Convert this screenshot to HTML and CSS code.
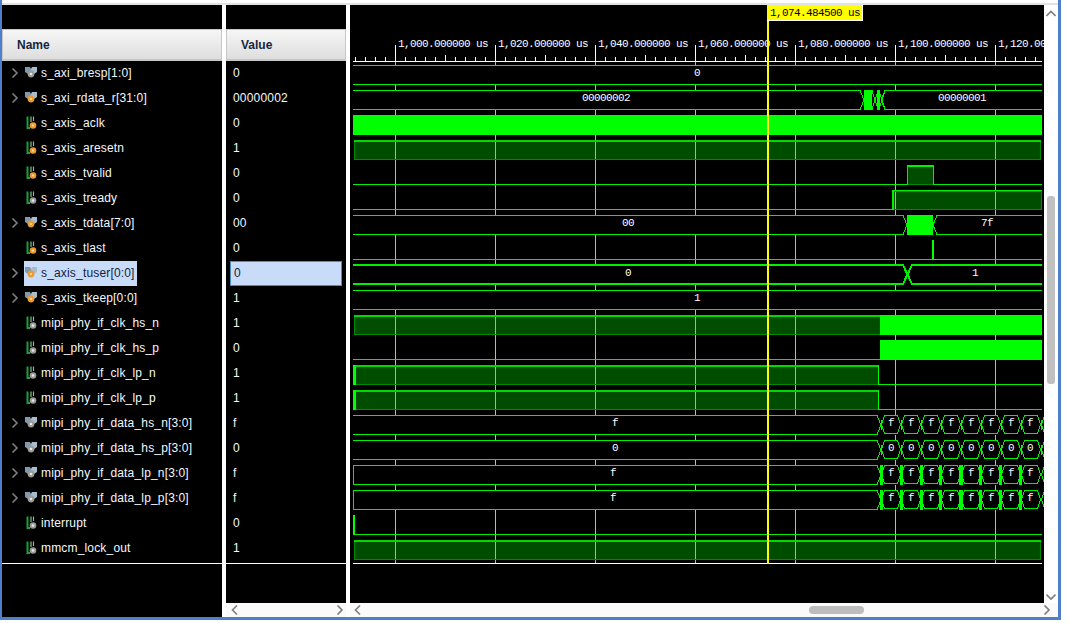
FILE: index.html
```html
<!DOCTYPE html>
<html lang="en">
<head>
<meta charset="utf-8">
<title>Waveform viewer</title>
<link rel="stylesheet" href="styles.css">
</head>
<body>
<svg class="defs" width="0" height="0" aria-hidden="true">
  <defs>
    <symbol id="bus-o" viewBox="0 0 14 12"><path class="bus-a" d="M1 0h5l1 2v5H4L1 5z"/><path class="bus-b" d="M13 0H8L7 2v5h3l3-2z"/><circle class="dot-o" cx="7" cy="7" r="3.4"/><circle class="dot-c" cx="7" cy="7" r="1.1"/></symbol>
    <symbol id="bus-g" viewBox="0 0 14 12"><path class="bus-a" d="M1 0h5l1 2v5H4L1 5z"/><path class="bus-b" d="M13 0H8L7 2v5h3l3-2z"/><circle class="dot-g" cx="7" cy="7" r="3.4"/><circle class="dot-w" cx="7" cy="7" r="1.3"/></symbol>
    <symbol id="sig-o" viewBox="0 0 14 14"><path class="sig-l" d="M3.500 .5V12H6"/><path class="sig-r" d="M7 .5V6M9.500 .5V5"/><circle class="dot-o" cx="9" cy="9.500" r="3.300"/><circle class="dot-c" cx="9" cy="9.500" r="1.100"/></symbol>
    <symbol id="sig-g" viewBox="0 0 14 14"><path class="sig-l" d="M3.500 .5V12H6"/><path class="sig-r" d="M7 .5V6M9.500 .5V5"/><circle class="dot-g" cx="9" cy="9.500" r="3.300"/><circle class="dot-w" cx="9" cy="9.500" r="1.300"/></symbol>
    <symbol id="chev-r" viewBox="0 0 8 10"><path class="chev" d="M1.500 .5l4.500 4.500-4.500 4.500"/></symbol>
    <symbol id="chev-l" viewBox="0 0 8 10"><path class="chev" d="M6 .5L1.500 5 6 9.500"/></symbol>
    <symbol id="chev-u" viewBox="0 0 10 8"><path class="chev" d="M.5 6L5 1.500 9.500 6"/></symbol>
    <symbol id="chev-d" viewBox="0 0 10 8"><path class="chev" d="M.5 1.500L5 6 9.500 1.500"/></symbol>
  </defs>
</svg>
<div class="window">
  <div class="strip"></div>
  <div class="panes">
    <section class="name-pane">
      <div class="top-gap"></div>
      <div class="head head-name">Name</div>
      <div class="rows">
        <div class="row"><svg class="expander"><use href="#chev-r"/></svg><svg class="icon"><use href="#bus-g"/></svg><span class="label">s_axi_bresp[1:0]</span></div>
        <div class="row"><svg class="expander"><use href="#chev-r"/></svg><svg class="icon"><use href="#bus-o"/></svg><span class="label">s_axi_rdata_r[31:0]</span></div>
        <div class="row"><span class="expander"></span><svg class="icon"><use href="#sig-o"/></svg><span class="label">s_axis_aclk</span></div>
        <div class="row"><span class="expander"></span><svg class="icon"><use href="#sig-o"/></svg><span class="label">s_axis_aresetn</span></div>
        <div class="row"><span class="expander"></span><svg class="icon"><use href="#sig-o"/></svg><span class="label">s_axis_tvalid</span></div>
        <div class="row"><span class="expander"></span><svg class="icon"><use href="#sig-g"/></svg><span class="label">s_axis_tready</span></div>
        <div class="row"><svg class="expander"><use href="#chev-r"/></svg><svg class="icon"><use href="#bus-o"/></svg><span class="label">s_axis_tdata[7:0]</span></div>
        <div class="row"><span class="expander"></span><svg class="icon"><use href="#sig-o"/></svg><span class="label">s_axis_tlast</span></div>
        <div class="row"><svg class="expander"><use href="#chev-r"/></svg><div class="selected"><svg class="icon"><use href="#bus-o"/></svg><span class="label">s_axis_tuser[0:0]</span></div></div>
        <div class="row"><svg class="expander"><use href="#chev-r"/></svg><svg class="icon"><use href="#bus-o"/></svg><span class="label">s_axis_tkeep[0:0]</span></div>
        <div class="row"><span class="expander"></span><svg class="icon"><use href="#sig-g"/></svg><span class="label">mipi_phy_if_clk_hs_n</span></div>
        <div class="row"><span class="expander"></span><svg class="icon"><use href="#sig-g"/></svg><span class="label">mipi_phy_if_clk_hs_p</span></div>
        <div class="row"><span class="expander"></span><svg class="icon"><use href="#sig-g"/></svg><span class="label">mipi_phy_if_clk_lp_n</span></div>
        <div class="row"><span class="expander"></span><svg class="icon"><use href="#sig-g"/></svg><span class="label">mipi_phy_if_clk_lp_p</span></div>
        <div class="row"><svg class="expander"><use href="#chev-r"/></svg><svg class="icon"><use href="#bus-g"/></svg><span class="label">mipi_phy_if_data_hs_n[3:0]</span></div>
        <div class="row"><svg class="expander"><use href="#chev-r"/></svg><svg class="icon"><use href="#bus-g"/></svg><span class="label">mipi_phy_if_data_hs_p[3:0]</span></div>
        <div class="row"><svg class="expander"><use href="#chev-r"/></svg><svg class="icon"><use href="#bus-g"/></svg><span class="label">mipi_phy_if_data_lp_n[3:0]</span></div>
        <div class="row"><svg class="expander"><use href="#chev-r"/></svg><svg class="icon"><use href="#bus-g"/></svg><span class="label">mipi_phy_if_data_lp_p[3:0]</span></div>
        <div class="row"><span class="expander"></span><svg class="icon"><use href="#sig-g"/></svg><span class="label">interrupt</span></div>
        <div class="row"><span class="expander"></span><svg class="icon"><use href="#sig-g"/></svg><span class="label">mmcm_lock_out</span></div>
      </div>
      <div class="end-line"></div>
    </section>

    <section class="value-pane">
      <div class="top-gap"></div>
      <div class="head head-value">Value</div>
      <div class="rows">
        <div class="vrow">0</div>
        <div class="vrow">00000002</div>
        <div class="vrow">0</div>
        <div class="vrow">1</div>
        <div class="vrow">0</div>
        <div class="vrow">0</div>
        <div class="vrow">00</div>
        <div class="vrow">0</div>
        <div class="vrow vrow-selected">0</div>
        <div class="vrow">1</div>
        <div class="vrow">1</div>
        <div class="vrow">0</div>
        <div class="vrow">1</div>
        <div class="vrow">1</div>
        <div class="vrow">f</div>
        <div class="vrow">0</div>
        <div class="vrow">f</div>
        <div class="vrow">f</div>
        <div class="vrow">0</div>
        <div class="vrow">1</div>
      </div>
      <div class="end-line"></div>
      <div class="spacer"></div>
      <div class="hscroll"><svg class="arrow-h"><use href="#chev-l"/></svg><svg class="arrow-h"><use href="#chev-r"/></svg></div>
    </section>

    <section class="wave-pane">
      <div class="wave-main">
        <svg class="wave" viewBox="350 5 694 598" width="694" height="598">
          <defs>
            <pattern id="ticks" patternUnits="userSpaceOnUse" x="395" y="50" width="100" height="11">
              <rect class="tick" x="10" y="7" width="1" height="4"/><rect class="tick" x="20" y="7" width="1" height="4"/>
              <rect class="tick" x="30" y="7" width="1" height="4"/><rect class="tick" x="40" y="7" width="1" height="4"/>
              <rect class="tick" x="50" y="5" width="1" height="6"/><rect class="tick" x="60" y="7" width="1" height="4"/>
              <rect class="tick" x="70" y="7" width="1" height="4"/><rect class="tick" x="80" y="7" width="1" height="4"/>
              <rect class="tick" x="90" y="7" width="1" height="4"/>
            </pattern>
            <g id="cell"><path class="wire" d="M.5 9.500L3.500 .5H16.500L19.500 9.500L16.500 18.500H3.500Z"/></g>
            <g id="cellrow">
              <use href="#cell" x="0"/><use href="#cell" x="20"/><use href="#cell" x="40"/><use href="#cell" x="60"/><use href="#cell" x="80"/>
              <use href="#cell" x="100"/><use href="#cell" x="120"/><use href="#cell" x="140"/>
            </g>
            <g id="waists">
              <rect class="solid" x="0" y="5" width="1" height="10"/><rect class="solid" x="20" y="5" width="1" height="10"/><rect class="solid" x="40" y="5" width="1" height="10"/>
              <rect class="solid" x="60" y="5" width="1" height="10"/><rect class="solid" x="80" y="5" width="1" height="10"/><rect class="solid" x="100" y="5" width="1" height="10"/>
              <rect class="solid" x="120" y="5" width="1" height="10"/><rect class="solid" x="140" y="5" width="1" height="10"/><rect class="solid" x="160" y="5" width="1" height="10"/>
            </g>
            <g id="bars">
              <rect class="solid" x="0" y="0" width="3" height="20"/><rect class="solid" x="20" y="0" width="3" height="20"/><rect class="solid" x="40" y="0" width="3" height="20"/>
              <rect class="solid" x="59" y="0" width="3" height="20"/><rect class="solid" x="79" y="0" width="4" height="20"/><rect class="solid" x="99" y="0" width="3" height="20"/>
              <rect class="solid" x="119" y="0" width="3" height="20"/><rect class="solid" x="139" y="0" width="3" height="20"/>
            </g>
            <g id="labels-f">
              <text class="wtxt mid" x="891" y="11">f</text><text class="wtxt mid" x="911" y="11">f</text><text class="wtxt mid" x="931" y="11">f</text><text class="wtxt mid" x="951" y="11">f</text>
              <text class="wtxt mid" x="971" y="11">f</text><text class="wtxt mid" x="991" y="11">f</text><text class="wtxt mid" x="1011" y="11">f</text><text class="wtxt mid" x="1030" y="11">f</text>
            </g>
          </defs>

          <!-- grid -->
          <rect class="grid" x="395" y="62" width="1" height="501"/><rect class="grid" x="495" y="62" width="1" height="501"/>
          <rect class="grid" x="595" y="62" width="1" height="501"/><rect class="grid" x="695" y="62" width="1" height="501"/>
          <rect class="grid" x="795" y="62" width="1" height="501"/><rect class="grid" x="895" y="62" width="1" height="501"/>
          <rect class="grid" x="995" y="62" width="1" height="501"/>

          <!-- ruler -->
          <rect class="tick" x="353" y="61" width="689" height="1"/>
          <rect x="353" y="50" width="689" height="11" fill="url(#ticks)"/>
          <rect class="tick" x="395" y="45" width="1" height="16"/><rect class="tick" x="495" y="45" width="1" height="16"/>
          <rect class="tick" x="595" y="45" width="1" height="16"/><rect class="tick" x="695" y="45" width="1" height="16"/>
          <rect class="tick" x="795" y="45" width="1" height="16"/><rect class="tick" x="895" y="45" width="1" height="16"/>
          <rect class="tick" x="995" y="45" width="1" height="16"/>
          <text class="wtxt" x="398" y="47">1,000.000000 us</text>
          <text class="wtxt" x="498" y="47">1,020.000000 us</text>
          <text class="wtxt" x="598" y="47">1,040.000000 us</text>
          <text class="wtxt" x="698" y="47">1,060.000000 us</text>
          <text class="wtxt" x="798" y="47">1,080.000000 us</text>
          <text class="wtxt" x="898" y="47">1,100.000000 us</text>
          <text class="wtxt" x="998" y="47">1,120.000000 us</text>

          <!-- bus backgrounds hide the grid -->
          <rect class="bg" x="353" y="65" width="689" height="20"/><rect class="bg" x="353" y="90" width="689" height="20"/>
          <rect class="bg" x="353" y="215" width="689" height="20"/><rect class="bg" x="353" y="265" width="689" height="20"/>
          <rect class="bg" x="353" y="290" width="689" height="20"/><rect class="bg" x="353" y="415" width="691" height="20"/>
          <rect class="bg" x="353" y="440" width="691" height="20"/><rect class="bg" x="353" y="465" width="691" height="20"/>
          <rect class="bg" x="353" y="490" width="691" height="20"/>

          <!-- s_axi_bresp -->
          <path class="wire" d="M353 65.500H1042M353 84.500H1042"/>
          <text class="wtxt mid" x="697" y="76">0</text>

          <!-- s_axi_rdata_r -->
          <path class="wire" d="M353 90.500H860L864 100L860 109.500H353M872 90.500L878 109.500M872 109.500L878 90.500M1042 90.500H885L881 100L885 109.500H1042M879 90.500L885 109.500M879 109.500L885 90.500"/>
          <rect class="solid" x="864" y="90" width="8" height="20"/><rect class="solid" x="877" y="90" width="3" height="20"/>
          <text class="wtxt mid" x="606" y="101">00000002</text>
          <text class="wtxt mid" x="962" y="101">00000001</text>

          <!-- s_axis_aclk -->
          <rect class="solid" x="353" y="115" width="689" height="20"/>

          <!-- s_axis_aresetn -->
          <rect class="dark" x="354.500" y="141.500" width="686" height="18"/>
          <rect class="hi" x="354" y="140" width="687" height="2"/>

          <!-- s_axis_tvalid -->
          <path class="dark" d="M907.500 184.500V166H933.500V184.500Z"/>
          <path class="wire2" d="M353 184.500H907.500V166H933.500V184.500H1042"/>

          <!-- s_axis_tready -->
          <rect class="dark" x="893" y="191" width="148" height="18"/>
          <path class="wire2" d="M353 209.500H893V190.500H1042"/>

          <!-- s_axis_tdata -->
          <path class="wire" d="M353 215.500H903L907 225L903 234.500H353M1042 215.500H937L933 225L937 234.500H1042"/>
          <rect class="solid" x="907" y="215" width="26" height="20"/>
          <text class="wtxt mid" x="628" y="226">00</text>
          <text class="wtxt mid" x="987" y="226">7f</text>

          <!-- s_axis_tlast -->
          <path class="wire" d="M353 259.500H1042"/>
          <rect class="solid" x="932" y="240" width="2" height="20"/>

          <!-- s_axis_tuser -->
          <path class="thick" d="M353 265H903L912 284H1042M353 284H903L912 265H1042"/>
          <text class="wtxt mid" x="628" y="276">0</text>
          <text class="wtxt mid" x="975" y="276">1</text>

          <!-- s_axis_tkeep -->
          <path class="wire" d="M353 290.500H1042M353 309.500H1042"/>
          <text class="wtxt mid" x="697" y="301">1</text>

          <!-- clk_hs_n -->
          <rect class="dark" x="354.500" y="316.500" width="526" height="18"/>
          <rect class="hi" x="354" y="315" width="526" height="2"/>
          <rect class="solid" x="880" y="315" width="162" height="20"/>

          <!-- clk_hs_p -->
          <path class="wire" d="M353 359.500H880"/>
          <rect class="solid" x="880" y="340" width="162" height="20"/>

          <!-- clk_lp_n -->
          <rect class="dark" x="355.500" y="366.500" width="523" height="18"/>
          <rect class="hi" x="353" y="365" width="526" height="2"/>
          <rect class="solid" x="353" y="365" width="3" height="20"/>
          <rect class="solid" x="877.500" y="365" width="1.500" height="20"/>
          <path class="wire" d="M878 384.500H1042"/>

          <!-- clk_lp_p -->
          <rect class="dark" x="355.500" y="391.500" width="523" height="18"/>
          <rect class="hi" x="353" y="390" width="526" height="2"/>
          <rect class="solid" x="353" y="390" width="3" height="20"/>
          <rect class="solid" x="877.500" y="390" width="1.500" height="20"/>
          <path class="wire" d="M878 409.500H1042"/>

          <!-- data_hs_n -->
          <path class="wire" d="M353 415.500H877L881 425L877 434.500H353"/>
          <use href="#cellrow" x="881" y="415"/><use href="#cell" x="1041" y="415"/>
          <use href="#waists" x="881" y="415"/>
          <text class="wtxt mid" x="615" y="426">f</text>
          <use href="#labels-f" y="415"/>

          <!-- data_hs_p -->
          <path class="wire" d="M353 440.500H877L881 450L877 459.500H353"/>
          <use href="#cellrow" x="881" y="440"/><use href="#cell" x="1041" y="440"/>
          <use href="#waists" x="881" y="440"/>
          <text class="wtxt mid" x="615" y="451">0</text>
          <text class="wtxt mid" x="891" y="451">0</text><text class="wtxt mid" x="911" y="451">0</text><text class="wtxt mid" x="931" y="451">0</text><text class="wtxt mid" x="951" y="451">0</text>
          <text class="wtxt mid" x="971" y="451">0</text><text class="wtxt mid" x="991" y="451">0</text><text class="wtxt mid" x="1011" y="451">0</text><text class="wtxt mid" x="1030" y="451">0</text>

          <!-- data_lp_n -->
          <path class="wire" d="M877 465.500H353.500V484.500H877L881 475Z"/>
          <use href="#cellrow" x="881" y="465"/><use href="#cell" x="1041" y="465"/>
          <use href="#bars" x="880" y="465"/>
          <text class="wtxt mid" x="613" y="476">f</text>
          <use href="#labels-f" y="465"/>

          <!-- data_lp_p -->
          <path class="wire" d="M877 490.500H353.500V509.500H877L881 500Z"/>
          <use href="#cellrow" x="881" y="490"/><use href="#cell" x="1041" y="490"/>
          <use href="#bars" x="880" y="490"/>
          <text class="wtxt mid" x="613" y="501">f</text>
          <use href="#labels-f" y="490"/>

          <!-- interrupt -->
          <rect class="solid" x="353" y="515" width="2" height="20"/>
          <path class="wire" d="M353 534.500H1042"/>

          <!-- mmcm_lock_out -->
          <rect class="dark" x="354.500" y="541.500" width="686" height="18"/>
          <rect class="hi" x="354" y="540" width="687" height="2"/>

          <!-- end line and cursor -->
          <rect class="tick" x="353" y="563" width="689" height="1"/>
          <rect class="cursor" x="767" y="20" width="2" height="544"/>
          <rect class="flag-edge" x="767" y="5" width="95.500" height="16"/>
          <rect class="cursor" x="767" y="5" width="94.500" height="15"/>
          <text class="flag-text" x="770" y="16">1,074.484500 us</text>
        </svg>
        <div class="vscroll">
          <svg class="arrow-v"><use href="#chev-u"/></svg>
          <div class="vthumb"></div>
          <svg class="arrow-v arrow-down"><use href="#chev-d"/></svg>
        </div>
      </div>
      <div class="hscroll hscroll-wave">
        <svg class="arrow-h"><use href="#chev-l"/></svg>
        <div class="hthumb"></div>
        <svg class="arrow-h"><use href="#chev-r"/></svg>
      </div>
    </section>
  </div>
</div>
</body>
</html>
```
FILE: styles.css
```css
* { box-sizing: border-box; }
html, body { margin: 0; padding: 0; background: #fff; overflow: hidden; }
body { width: 1068px; height: 623px; font-family: "Liberation Sans", Arial, sans-serif; }
.defs { position: absolute; }

.window {
  width: 1061px;
  height: 620px;
  background: #fff;
  border-left: 2px solid #4f7fcb;
  border-right: 3px solid #4f7fcb;
  border-bottom: 3px solid #4f7fcb;
  padding-top: 3px;
  display: flex;
  flex-direction: column;
}
.strip { height: 2px; background: #e2e2e2; flex: none; }
.panes { flex: 1; display: flex; min-height: 0; }

.name-pane { width: 220px; background: #000; margin-right: 4px; display: flex; flex-direction: column; }
.value-pane { width: 120px; background: #000; margin-right: 4px; display: flex; flex-direction: column; }
.wave-pane { width: 708px; display: flex; flex-direction: column; }

.top-gap { height: 24px; flex: none; }
.head {
  height: 32px;
  flex: none;
  display: flex;
  align-items: center;
  font-size: 12px;
  font-weight: 700;
  color: #16263f;
  background: linear-gradient(#f6f6f6, #dedede);
  border: 1px solid #c6c6c6;
  border-bottom-width: 2px;
}
.head-name { padding-left: 14px; }
.head-value { padding-left: 14px; }

.rows { display: flex; flex-direction: column; }
.row {
  height: 25px;
  display: flex;
  align-items: center;
  padding-left: 9px;
  padding-bottom: 2px;
  color: #f4f8ff;
  font-size: 12px;
  white-space: nowrap;
}
.expander { width: 8px; height: 10px; margin-right: 5px; flex: none; }
.icon { width: 14px; height: 14px; margin-right: 3px; flex: none; }
.label { letter-spacing: 0.17px; }
.selected {
  height: 25px;
  margin-bottom: -2px;
  padding-bottom: 2px;
  display: flex;
  align-items: center;
  width: 113px;
  background: #c8dcfa;
  color: #14233c;
}
.vrow {
  height: 25px;
  display: flex;
  align-items: center;
  padding-left: 7px;
  padding-bottom: 2px;
  font-size: 12px;
  letter-spacing: 0.2px;
  color: #f4f8ff;
}
.vrow-selected {
  margin: 0 4px;
  padding-left: 3px;
  padding-bottom: 1px;
  background: #c8dcfa;
  border: 1px solid #4d8cc4;
  color: #14233c;
}
.end-line { height: 1px; background: #fff; margin-top: 2px; flex: none; }
.spacer { flex: 1; }

.hscroll {
  height: 14px;
  flex: none;
  background: #fafafa;
  display: flex;
  align-items: center;
  justify-content: space-between;
  padding: 0 2px 0 5px;
}
.hscroll-wave { padding: 0 7px 0 4px; justify-content: flex-start; }
.arrow-h { width: 8px; height: 10px; flex: none; }
.hthumb { width: 55px; height: 8px; margin: 0 172px 0 447px; background: #bdbdbd; border-radius: 4px; flex: none; }
.hscroll-wave .arrow-h:last-child { margin-left: auto; }

.wave-main { flex: 1; display: flex; min-height: 0; }
.wave { display: block; background: #000; flex: none; }
.vscroll { width: 14px; background: #fff; display: flex; flex-direction: column; align-items: flex-start; padding-left: 2px; }
.arrow-v { width: 10px; height: 8px; margin-top: 5px; flex: none; }
.arrow-down { margin-top: auto; margin-bottom: 2px; }
.vthumb { width: 8px; height: 188px; margin: 178px 0 0 1px; background: #c0c0c0; border-radius: 3px; flex: none; }

.chev { fill: none; stroke: #7e7e7e; stroke-width: 1.6; }
.bus-a { fill: #7f99ae; }
.bus-b { fill: #a9bccb; }
.dot-o { fill: #ef9a2e; }
.dot-c { fill: #fbe3b8; }
.dot-g { fill: #9a9a9a; }
.dot-w { fill: #e8e8e8; }
.sig-l { fill: none; stroke: #1f9c3a; stroke-width: 2; }
.sig-r { fill: none; stroke: #7cc488; stroke-width: 1.2; }

.grid { fill: #b8b8b8; shape-rendering: crispEdges; }
.tick { fill: #fff; shape-rendering: crispEdges; }
.bg { fill: #000; shape-rendering: crispEdges; }
.wire { fill: none; stroke: #00f000; stroke-width: 1; shape-rendering: crispEdges; }
.wire2 { fill: none; stroke: #00f000; stroke-width: 1.5; shape-rendering: crispEdges; }
.thick { fill: none; stroke: #00f000; stroke-width: 2; shape-rendering: crispEdges; }
.solid { fill: #00ff00; shape-rendering: crispEdges; }
.dark { fill: #00ff00; fill-opacity: 0.3; stroke: #008a00; stroke-width: 1; shape-rendering: crispEdges; }
.hi { fill: #00d800; shape-rendering: crispEdges; }
.cursor { fill: #ffff00; shape-rendering: crispEdges; }
.flag-edge { fill: #fff; shape-rendering: crispEdges; }
.wtxt { fill: #fff; font-family: "Liberation Mono", monospace; font-size: 11px; letter-spacing: -0.6px; }
.mid { text-anchor: middle; }
.flag-text { fill: #000; font-family: "Liberation Mono", monospace; font-size: 11px; letter-spacing: -0.6px; }
```
